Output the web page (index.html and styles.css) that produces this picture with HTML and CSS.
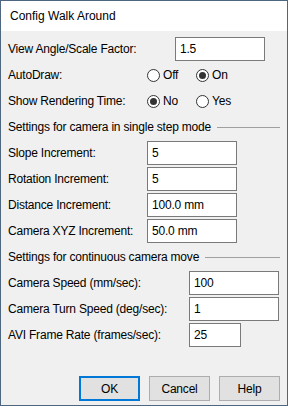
FILE: index.html
```html
<!DOCTYPE html>
<html>
<head>
<meta charset="utf-8">
<link rel="stylesheet" href="styles.css">
</head>
<body>
<div class="window">
  <div class="titlebar">Config Walk Around</div>
  <div class="body">
    <div class="rows">
      <div class="row">
        <span class="label w167">View Angle/Scale Factor:</span>
        <div class="field w90">1.5</div>
      </div>
      <div class="row">
        <span class="label w139">AutoDraw:</span>
        <span class="radio"><span class="dot"></span>Off</span>
        <span class="radio"><span class="dot on"></span>On</span>
      </div>
      <div class="row">
        <span class="label w139">Show Rendering Time:</span>
        <span class="radio"><span class="dot on"></span>No</span>
        <span class="radio"><span class="dot"></span>Yes</span>
      </div>
      <div class="row sep">
        <span>Settings for camera in single step mode</span>
        <span class="line"></span>
      </div>
      <div class="row">
        <span class="label w139">Slope Increment:</span>
        <div class="field w90">5</div>
      </div>
      <div class="row">
        <span class="label w139">Rotation Increment:</span>
        <div class="field w90">5</div>
      </div>
      <div class="row">
        <span class="label w139">Distance Increment:</span>
        <div class="field w90">100.0 mm</div>
      </div>
      <div class="row">
        <span class="label w139">Camera XYZ Increment:</span>
        <div class="field w90">50.0 mm</div>
      </div>
      <div class="row sep">
        <span>Settings for continuous camera move</span>
        <span class="line"></span>
      </div>
      <div class="row">
        <span class="label w181">Camera Speed (mm/sec):</span>
        <div class="field w90">100</div>
      </div>
      <div class="row">
        <span class="label w181">Camera Turn Speed (deg/sec):</span>
        <div class="field w90">1</div>
      </div>
      <div class="row">
        <span class="label w181">AVI Frame Rate (frames/sec):</span>
        <div class="field w52">25</div>
      </div>
    </div>
    <div class="buttons">
      <button class="btn default">OK</button>
      <button class="btn">Cancel</button>
      <button class="btn">Help</button>
    </div>
  </div>
</div>
</body>
</html>
```
FILE: styles.css
```css
html, body {
  margin: 0;
  padding: 0;
}
body {
  font-family: "Liberation Sans", Arial, sans-serif;
  font-size: 12px;
  color: #000;
  background: #f0f0f0;
}
.window {
  width: 288px;
  height: 406px;
  box-sizing: border-box;
  border: 1px solid #4f6680;
  display: flex;
  flex-direction: column;
  background: #f0f0f0;
}
.titlebar {
  height: 30px;
  background: #fff;
  display: flex;
  align-items: center;
  padding-left: 9px;
  flex: none;
}
.body {
  flex: 1;
  display: flex;
  flex-direction: column;
  padding: 6px 7px 4px 7px;
  letter-spacing: -0.2px;
}
.rows {
  display: flex;
  flex-direction: column;
  gap: 2px;
}
.row {
  height: 24px;
  display: flex;
  align-items: center;
}
.label {
  flex: none;
}
.w139 { width: 139px; }
.w167 { width: 167px; }
.w181 { width: 181px; }
.field {
  box-sizing: border-box;
  height: 24px;
  border: 1px solid #7a7a7a;
  background: #fff;
  padding-left: 4px;
  display: flex;
  align-items: center;
}
.w90 { width: 90px; }
.w52 { width: 52px; }
.radio {
  width: 49px;
  display: flex;
  align-items: center;
}
.dot {
  box-sizing: border-box;
  width: 13px;
  height: 13px;
  border: 1px solid #333;
  border-radius: 50%;
  background: #fff;
  margin-right: 3px;
  display: flex;
  align-items: center;
  justify-content: center;
}
.dot.on::after {
  content: "";
  width: 7px;
  height: 7px;
  border-radius: 50%;
  background: #333;
}
.sep .line {
  flex: 1;
  height: 1px;
  background: #a0a0a0;
  margin-left: 6px;
}
.buttons {
  margin-top: auto;
  display: flex;
  justify-content: flex-end;
  gap: 9px;
}
.btn {
  font: inherit;
  letter-spacing: inherit;
  box-sizing: border-box;
  width: 61px;
  height: 25px;
  background: #e1e1e1;
  border: 1px solid #adadad;
  color: #000;
  padding: 0;
}
.btn.default {
  border: 2px solid #0078d7;
}
```
